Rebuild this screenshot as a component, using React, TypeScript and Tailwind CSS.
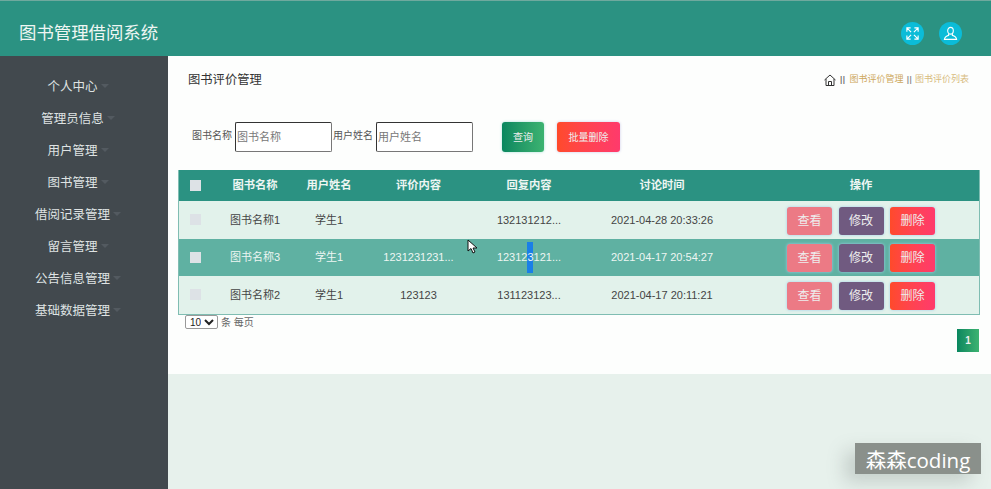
const menus = [
	"个人中心",
	"管理员信息",
	"用户管理",
	"图书管理",
	"借阅记录管理",
	"留言管理",
	"公告信息管理",
	"基础数据管理",
];

const rows = [
	{ name: "图书名称1", user: "学生1", content: "", reply: "132131212...", time: "2021-04-28 20:33:26", hover: false },
	{ name: "图书名称3", user: "学生1", content: "1231231231...", reply: "123123121...", time: "2021-04-17 20:54:27", hover: true },
	{ name: "图书名称2", user: "学生1", content: "123123", reply: "131123123...", time: "2021-04-17 20:11:21", hover: false },
];

function SearchInput({ label }: { label: string }) {
	return (
		<div className="flex items-center">
			<span className="w-[43px] text-[10px] leading-none text-[#555] pb-[3px]">{label}</span>
			<input
				placeholder={label}
				className="w-[97px] h-[30px] px-px text-[11px] bg-white border border-t-[#333] border-l-[#333] border-r-[#777] border-b-[#777] rounded-[2px] placeholder:text-[#777]"
			/>
		</div>
	);
}

function ActionButton({ label, className }: { label: string; className: string }) {
	return (
		<button
			type="button"
			className={`w-[45px] h-[28px] rounded-[3px] text-[12px] text-[#eee] shadow-[0_0_3px_#9fd0ea] ${className}`}
		>
			{label}
		</button>
	);
}

export default function App() {
	return (
		<div className="relative w-[991px] h-[489px] overflow-hidden flex flex-col font-['Liberation_Sans','Noto_Sans_CJK_SC',sans-serif]">
			{/* Header */}
			<header className="h-14 shrink-0 flex items-center justify-between bg-[#2b9282] border-t border-[#6fa99e] pt-[9px] pl-[19px] pr-[29px]">
				<h1 className="text-[17.4px] text-[#eef6f3]">图书管理借阅系统</h1>
				<div className="flex items-center gap-[15px]">
					<span className="w-[23px] h-[23px] rounded-full bg-[#0bbcd8] flex items-center justify-center">
						<svg width="15" height="15" viewBox="0 0 16 16" fill="none" stroke="#fff" strokeWidth="1.2">
							<path d="M2 6V2h4M10 2h4v4M14 10v4h-4M6 14H2v-4M2.5 2.5l4 4M13.5 2.5l-4 4M13.5 13.5l-4-4M2.5 13.5l4-4" />
						</svg>
					</span>
					<span className="w-[23px] h-[23px] rounded-full bg-[#0bbcd8] flex items-center justify-center">
						<svg width="15" height="15" viewBox="0 0 16 16" fill="none" stroke="#fff" strokeWidth="1.2">
							<ellipse cx="8" cy="5" rx="3" ry="3.6" />
							<path d="M6 8.3V10Q2 11 1.5 14.3H14.5Q14 11 10 10V8.3" />
						</svg>
					</span>
				</div>
			</header>

			<div className="flex flex-1 min-h-0">
				{/* Sidebar */}
				<aside className="w-[168px] shrink-0 bg-[#42494e] pt-[15px] pr-[23px]">
					{menus.map((m) => (
						<div key={m} className="h-8 flex items-center justify-center text-[12.5px] text-[#dfe3e3]">
							<span className="relative">
								{m}
								<span className="absolute left-full top-[6px] ml-[3px] border-x-4 border-t-4 border-x-transparent border-t-[#535a60]" />
							</span>
						</div>
					))}
				</aside>

				{/* Main */}
				<main className="flex-1 min-w-0 flex flex-col bg-[#e7f1ec]">
					<div className="h-[318px] bg-[#fdfefd] pl-[10px] pr-[11px]">
						<div className="flex items-center justify-between h-[46px] pt-[2px] pl-[10px] pr-[11px]">
							<span className="text-[12.3px] text-[#333]">图书评价管理</span>
							<div className="flex items-center text-[9px] text-[#cda85c]">
								<svg width="12" height="12" viewBox="0 0 12 12" fill="none" stroke="#333" strokeWidth="1">
									<path d="M.5 6 6 1l5.5 5M2 5v6.5h8V5M4.5 11.5V7.5h3v4" />
								</svg>
								<span className="mx-[4px] text-[#666] text-[10px]">II</span>
								<span>图书评价管理</span>
								<span className="mx-[3px] text-[#888] text-[10px]">II</span>
								<span className="text-[#d8bc80]">图书评价列表</span>
							</div>
						</div>

						{/* Search */}
						<div className="flex items-center mt-5 pl-[14px] h-[30px]">
							<SearchInput label="图书名称" />
							<div className="ml-px">
								<SearchInput label="用户姓名" />
							</div>
							<button
								type="button"
								className="ml-[29px] w-[42px] h-[30px] rounded-[3px] text-[10px] text-[#eee] bg-gradient-to-r from-[#07875f] to-[#3cb371] shadow-[0_0_3px_#a8e0d8]"
							>
								查询
							</button>
							<button
								type="button"
								className="ml-[13px] w-[63px] h-[30px] rounded-[3px] text-[10px] text-[#eee] bg-gradient-to-r from-[#ff4a2a] to-[#ff3a6c] shadow-[0_0_3px_#c8c8e8]"
							>
								批量删除
							</button>
						</div>

						{/* Table */}
						<table className="mt-[18px] w-[802px] table-fixed border-separate border-spacing-0 border-x border-b border-[#7fbdb2] text-[11px]">
							<colgroup>
								<col className="w-[35px]" />
								<col className="w-[82px]" />
								<col className="w-[66px]" />
								<col className="w-[113px]" />
								<col className="w-[108px]" />
								<col className="w-[158px]" />
								<col />
							</colgroup>
							<thead>
								<tr className="h-[31px] bg-[#2b9282] text-[11.3px] text-[#eef6f3] font-bold">
									<th className="p-0">
										<span className="block w-[11px] h-[11px] ml-[11px] bg-[#dde2e6]" />
									</th>
									<th className="p-0">图书名称</th>
									<th className="p-0">用户姓名</th>
									<th className="p-0">评价内容</th>
									<th className="p-0">回复内容</th>
									<th className="p-0">讨论时间</th>
									<th className="p-0 pl-[2px]">操作</th>
								</tr>
							</thead>
							<tbody>
								{rows.map((r) => (
									<tr
										key={r.name}
										className={`h-[37.5px] text-center ${r.hover ? "bg-[#5fb1a2] text-[#eef6f3]" : "bg-[#e2f2eb] text-[#444]"}`}
									>
										<td className="p-0">
											<span className="block w-[11px] h-[11px] ml-[11px] bg-[#dde2e6]" />
										</td>
										<td className="p-0">{r.name}</td>
										<td className="p-0">{r.user}</td>
										<td className="p-0">{r.content}</td>
										<td className="p-0 relative">
											{r.hover && (
												<span className="absolute left-[52px] top-[3px] w-[6px] h-[31px] bg-[#1a7fe8]" />
											)}
											<span className="relative">{r.reply}</span>
										</td>
										<td className="p-0">{r.time}</td>
										<td className="p-0">
											<div className="flex justify-center gap-[6.5px] pt-[2px] pl-[2px]">
												<ActionButton label="查看" className="bg-[#ec7a85]" />
												<ActionButton label="修改" className="bg-[#705a80]" />
												<ActionButton
													label="删除"
													className="bg-gradient-to-r from-[#ff4a2a] to-[#ff3a6c]"
												/>
											</div>
										</td>
									</tr>
								))}
							</tbody>
						</table>

						{/* Pagination */}
						<div className="flex items-start justify-between w-[802px] pl-[7px] pr-px">
							<div className="flex items-center gap-[3px] text-[10px] text-[#666]">
								<select className="w-[33px] h-[14px] text-[10px] text-[#222] border border-[#999] rounded-[2px] bg-white">
									<option>10</option>
								</select>
								<span>条 每页</span>
							</div>
							<span className="mt-[14px] w-[22px] h-[23px] flex items-center justify-center text-[10px] font-bold text-[#eee] bg-gradient-to-r from-[#07875f] to-[#3cb371]">
								1
							</span>
						</div>
					</div>
				</main>
			</div>

			{/* Screen recording overlays */}
			<svg className="absolute left-[467px] top-[239px]" width="11" height="16" viewBox="0 0 11 16">
				<path d="M1 1v11l3-2.5L6 14l2-1-2-4h4z" fill="#fff" stroke="#111" strokeWidth="1" />
			</svg>
			<div className="absolute left-[855px] top-[443px] w-[126px] h-[31px] flex items-center justify-center pt-[3px] leading-none bg-[#8a908b] text-[20.5px] text-white font-['Open_Sans','Noto_Sans_CJK_SC',sans-serif] shadow-[-10px_8px_18px_rgba(120,130,125,0.3)]">
				森森coding
			</div>
		</div>
	);
}
